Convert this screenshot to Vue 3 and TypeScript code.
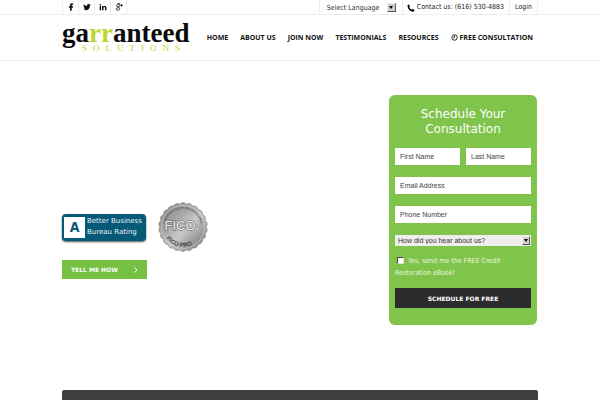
<script setup lang="ts">
import { ref } from 'vue'

interface NavItem {
  label: string
  icon?: boolean
}

const navItems: NavItem[] = [
  { label: 'HOME' },
  { label: 'ABOUT US' },
  { label: 'JOIN NOW' },
  { label: 'TESTIMONIALS' },
  { label: 'RESOURCES' },
  { label: 'FREE CONSULTATION', icon: true },
]

const firstName = ref('')
const lastName = ref('')
const email = ref('')
const phone = ref('')
const source = ref('')
const language = ref('')
const wantsBook = ref(false)

// Scalloped outline of the seal: alternating valleys and rounded bumps.
function scallops(count: number, inner: number, outer: number): string {
  const at = (r: number, a: number) => `${(25 + r * Math.cos(a)).toFixed(2)} ${(25 + r * Math.sin(a)).toFixed(2)}`
  const step = (Math.PI * 2) / count
  let d = `M${at(inner, 0)}`
  for (let i = 0; i < count; i++) {
    d += `Q${at(outer, (i + 0.5) * step)} ${at(inner, (i + 1) * step)}`
  }
  return d + 'Z'
}
const sealEdge = scallops(22, 23, 26)
</script>

<template>
  <div class="page">
    <div class="topbar">
      <div class="wrap topbar-row">
        <nav class="social" aria-label="Social media">
          <a href="#" aria-label="Facebook">
            <svg viewBox="0 0 10 10"><path d="M3.800 9.700V5.800H2.300V4H3.800V2.900C3.800 1.200 4.800.4 6.200.4L7.700.5V2.200H6.800C6.100 2.200 5.900 2.500 5.900 3V4H7.600L7.300 5.800H5.900V9.700Z" /></svg>
          </a>
          <a href="#" aria-label="Twitter">
            <svg viewBox="0 0 10 10"><path d="M9.600 2.200 8.700 3.100C8.900 6.600 6.200 9 3.300 9 2.100 9 1.200 8.700.4 8.200 1.500 8.300 2.400 8 3.100 7.400 2.200 7.400 1.600 6.800 1.300 6.100H2.200C1.200 5.800.7 5 .7 4.100L1.500 4.300C.7 3.600.5 2.500 1 1.600 2 2.800 3.400 3.500 5 3.600 4.700 2.300 5.700 1.200 6.900 1.200 7.500 1.200 8 1.400 8.300 1.800L9.500 1.300 8.900 2.400Z" /></svg>
          </a>
          <a href="#" aria-label="LinkedIn">
            <svg viewBox="0 0 10 10"><path d="M.8 3.700H2.600V9H.8ZM1.700 1.200A1 1 0 1 1 1.700 3.200 1 1 0 1 1 1.700 1.200ZM3.800 3.700H5.500V4.500C6.400 3.100 9.300 3.200 9.300 5.800V9H7.500V6.200C7.500 4.700 5.600 4.800 5.600 6.200V9H3.800Z" /></svg>
          </a>
          <a href="#" aria-label="Google Plus">
            <svg viewBox="0 0 10 10"><g fill="none" stroke="#222" stroke-width="1.100"><circle cx="3.900" cy="3" r="1.800" /><path d="M3.700.9H6.500M4.800 4.600C4 5.300 5.900 5.700 5.900 7.200 5.900 9.500 1.200 9.500 1.200 7.500 1.200 6.200 2.900 5.900 4.600 6M8.100 1.300V4.700M6.400 3H9.800" /></g></svg>
          </a>
        </nav>
        <div class="utility">
          <label class="language">
            <select v-model="language" aria-label="Select Language">
              <option value="">Select Language</option>
              <option value="es">Spanish</option>
            </select>
            <span class="arrow"></span>
          </label>
          <a class="contact" href="tel:6165304883">
            <svg viewBox="0 0 10 10"><path d="M.7 1.800C1.200.9 2 .5 2.600.8L3.700 2.800C3.700 3.300 2.900 3.600 2.900 4 3.400 5.400 4.400 6.500 5.900 7.100 6.400 7.100 6.700 6.300 7.200 6.300L9.200 7.500C9.500 8.100 9 9.200 8 9.500 4.300 10 .2 5.400.7 1.800Z" /></svg>
            <span>Contact us: (616) 530-4883</span>
          </a>
          <a class="login" href="#">Login</a>
        </div>
      </div>
    </div>

    <header class="header">
      <div class="wrap header-row">
        <a class="logo" href="#">
          <span class="logo-name">ga<em>rr</em>anteed</span>
          <span class="logo-sub">SOLUTIONS</span>
        </a>
        <nav class="menu" aria-label="Main">
          <a v-for="item in navItems" :key="item.label" href="#">
            <svg v-if="item.icon" viewBox="0 0 10 10"><circle cx="5" cy="5" r="3.900" /><path d="M5 2.400V5.300H3.300" /></svg>
            <span>{{ item.label }}</span>
          </a>
        </nav>
      </div>
    </header>

    <main class="wrap hero">
      <section class="intro">
        <div class="badges">
          <a class="bbb" href="#">
            <span class="grade">A</span>
            <span class="rating">Better Business<br />Bureau Rating</span>
          </a>
          <svg class="seal" viewBox="0 0 50 50" role="img" aria-label="FICO Pro seal">
            <defs>
              <linearGradient id="metal" x1="0" y1="0" x2="1" y2="1">
                <stop offset="0" stop-color="#858585" />
                <stop offset="0.350" stop-color="#a8a8a8" />
                <stop offset="0.550" stop-color="#c9c9c9" />
                <stop offset="0.750" stop-color="#a2a2a2" />
                <stop offset="1" stop-color="#777" />
              </linearGradient>
              <path id="arc-top" d="M7 25A18 18 0 0 1 43 25" />
              <path id="arc-bottom" d="M5 25A20 20 0 0 0 45 25" />
            </defs>
            <path :d="sealEdge" fill="url(#metal)" stroke="#858585" stroke-width="0.700" />
            <circle cx="25" cy="25" r="21.500" fill="url(#metal)" stroke="#d0d0d0" stroke-width="0.600" />
            <text class="seal-top"><textPath href="#arc-top" startOffset="50%">CERTIFIED FICO® PROFESSIONAL</textPath></text>
            <text class="seal-name" x="22" y="28">FICO</text>
            <circle cx="39" cy="27" r="0.700" fill="#eee" />
            <text class="seal-bottom"><textPath href="#arc-bottom" startOffset="42%">FICO PRO</textPath></text>
          </svg>
        </div>
        <a class="tell" href="#">
          <span>TELL ME HOW</span>
          <svg viewBox="0 0 6 8"><path d="M1.500 1.500 4 4 1.500 6.500" /></svg>
        </a>
      </section>

      <form class="card" @submit.prevent>
        <h1>Schedule Your Consultation</h1>
        <div class="pair">
          <input v-model="firstName" type="text" placeholder="First Name" aria-label="First Name" />
          <input v-model="lastName" type="text" placeholder="Last Name" aria-label="Last Name" />
        </div>
        <input v-model="email" type="email" placeholder="Email Address" aria-label="Email Address" />
        <input v-model="phone" type="tel" placeholder="Phone Number" aria-label="Phone Number" />
        <div class="source">
          <select v-model="source" aria-label="How did you hear about us?">
            <option value="">How did you hear about us?</option>
            <option value="friend">A friend</option>
          </select>
          <span class="arrow"></span>
        </div>
        <label class="book">
          <input v-model="wantsBook" type="checkbox" />
          Yes, send me the FREE Credit Restoration eBook!
        </label>
        <button type="submit">SCHEDULE FOR FREE</button>
      </form>
    </main>

    <div class="wrap panel"></div>
  </div>
</template>

<style>
body {
  margin: 0;
  background: #fff;
}
</style>

<style scoped>
* {
  box-sizing: border-box;
}
.page {
  display: flex;
  flex-direction: column;
  min-height: 100vh;
  font-family: "DejaVu Sans Condensed", "DejaVu Sans", sans-serif;
  font-size: 7px;
  color: #222;
}
a {
  color: inherit;
  text-decoration: none;
}
.wrap {
  width: 100%;
  max-width: 476px;
  margin: 0 auto;
}
.topbar {
  border-bottom: 1px solid #eee;
}
.topbar-row {
  display: flex;
  justify-content: space-between;
  height: 14px;
}
.social,
.utility {
  display: flex;
}
.social a {
  display: flex;
  align-items: center;
  justify-content: center;
  width: 16px;
  border-left: 1px solid #eee;
}
.social a:last-child {
  width: 17px;
  border-right: 1px solid #eee;
}
.social svg {
  width: 8px;
  height: 8px;
  fill: #111;
}
.language {
  position: relative;
  display: flex;
  align-items: center;
  width: 84px;
  padding: 1px 0 0 7px;
  border-left: 1px solid #eee;
  border-right: 1px solid #eee;
}
select {
  appearance: none;
  border: 0;
  border-radius: 0;
  margin: 0;
  outline: 0;
}
.language select {
  width: 70px;
  padding: 0;
  background: transparent;
  color: #333;
  font: 7px "DejaVu Sans Condensed", "DejaVu Sans", sans-serif;
}
.arrow {
  position: absolute;
  right: 6px;
  top: 3px;
  display: grid;
  place-items: center;
  width: 9px;
  height: 9px;
  background: #d4d0c8;
  border: 1px solid #eee;
  border-right-color: #555;
  border-bottom-color: #555;
  pointer-events: none;
}
.arrow::after {
  content: "";
  border: 2px solid transparent;
  border-top: 3px solid #000;
  border-bottom: 0;
}
.contact,
.login {
  display: flex;
  align-items: center;
}
.contact {
  gap: 2px;
  padding: 0 5px 0 4px;
  border-right: 1px solid #eee;
}
.contact svg {
  width: 8px;
  height: 8px;
  margin-top: 2px;
}
.login {
  padding: 0 5px;
  border-right: 1px solid #eee;
}
.header {
  border-bottom: 1px solid #eee;
}
.header-row {
  display: flex;
  justify-content: space-between;
  height: 45px;
}
.logo {
  display: flex;
  flex-direction: column;
  padding-top: 4px;
  font-family: "Liberation Serif", serif;
  color: #0a0a0a;
}
.logo-name {
  font-size: 27px;
  font-weight: bold;
  line-height: 28px;
}
.logo-name em {
  font-style: normal;
  color: #bfd62f;
}
.logo-sub {
  width: 0;
  margin-top: -4px;
  padding-left: 20px;
  font-size: 9px;
  line-height: 10px;
  letter-spacing: 6px;
  white-space: nowrap;
  color: #bfd62f;
}
.menu {
  display: flex;
  align-items: center;
  gap: 12px;
  padding-right: 5px;
  font-family: "Open Sans", sans-serif;
  font-weight: bold;
  font-size: 7px;
  color: #111;
}
.menu a {
  display: flex;
  align-items: center;
  gap: 2px;
  white-space: nowrap;
}
.menu svg {
  width: 7px;
  height: 7px;
  fill: none;
  stroke: #111;
  stroke-width: 1.3;
}
.hero {
  display: flex;
  justify-content: space-between;
  align-items: flex-start;
  padding: 34px 1px 65px 0;
}
.intro {
  padding-top: 107px;
}
.badges {
  display: flex;
  align-items: center;
  gap: 12px;
}
.bbb {
  display: flex;
  align-items: center;
  gap: 2px;
  width: 84px;
  height: 27px;
  padding: 2px;
  border-radius: 4px;
  background: #065a78;
  box-shadow: 0 1px 2px #555;
  color: #e5f0f4;
}
.grade {
  flex: none;
  width: 21px;
  height: 21px;
  background: #fff;
  color: #065a78;
  font-size: 14px;
  font-weight: bold;
  line-height: 21px;
  text-align: center;
}
.rating {
  font-family: "DejaVu Sans", sans-serif;
  font-size: 7px;
  line-height: 11px;
  white-space: nowrap;
}
.seal {
  width: 50px;
  height: 50px;
}
.seal text {
  font-family: "Liberation Sans", sans-serif;
  text-anchor: middle;
}
.seal .seal-top {
  font-size: 3px;
  font-weight: bold;
  fill: #555;
}
.seal .seal-name {
  font-size: 13px;
  fill: #eee;
  stroke: #777;
  stroke-width: 1.5px;
  paint-order: stroke;
}
.seal .seal-bottom {
  font-size: 6px;
  font-weight: bold;
  fill: #444;
}
.tell {
  display: flex;
  align-items: center;
  justify-content: space-between;
  width: 85px;
  height: 19px;
  margin-top: 8px;
  padding: 0 8px 0 9px;
  background: #76c043;
  color: #fff;
  font-family: "DejaVu Sans", sans-serif;
  font-weight: bold;
  font-size: 6px;
}
.tell svg {
  width: 6px;
  height: 8px;
  fill: none;
  stroke: #fff;
}
.card {
  display: flex;
  flex-direction: column;
  width: 148px;
  padding: 12px 6px 17px;
  border-radius: 6px;
  background: #80c44c;
}
.card h1 {
  margin: 0 0 11px;
  padding: 0 20px;
  color: #fff;
  font-family: "DejaVu Sans", sans-serif;
  font-size: 12px;
  font-weight: normal;
  line-height: 15px;
  text-align: center;
}
.card input:not([type="checkbox"]) {
  width: 100%;
  min-width: 0;
  height: 17px;
  margin: 0 0 12px;
  padding: 0 5px;
  border: 0;
  outline: 0;
  background: #fff;
  color: #444;
  font: 7px "Liberation Sans", sans-serif;
}
.card input::placeholder {
  color: #444;
  opacity: 1;
}
.pair {
  display: flex;
  gap: 6px;
}
.source {
  position: relative;
  display: flex;
}
.source select {
  width: 100%;
  height: 11px;
  padding: 0 3px;
  background: #eee;
  color: #333;
  font: 7px "Liberation Sans", sans-serif;
}
.source .arrow {
  top: 1px;
  right: 1px;
  width: 8px;
}
.book {
  margin-top: 9px;
  color: #eaf6df;
  font-size: 7px;
  line-height: 12px;
}
.book input {
  appearance: none;
  width: 7px;
  height: 7px;
  margin: 0 2px 3px;
  border: 1px solid #ddd;
  border-top-color: #444;
  border-left-color: #444;
  background: #fff;
  vertical-align: bottom;
}
.book input:checked {
  background: #333;
}
.card button {
  height: 20px;
  margin-top: 9px;
  padding: 0;
  border: 0;
  background: #2c2c2c;
  color: #fff;
  font: bold 6px "DejaVu Sans", sans-serif;
}
.panel {
  flex: 1 0 10px;
  border-radius: 2px 2px 0 0;
  background: #404040;
}
</style>
